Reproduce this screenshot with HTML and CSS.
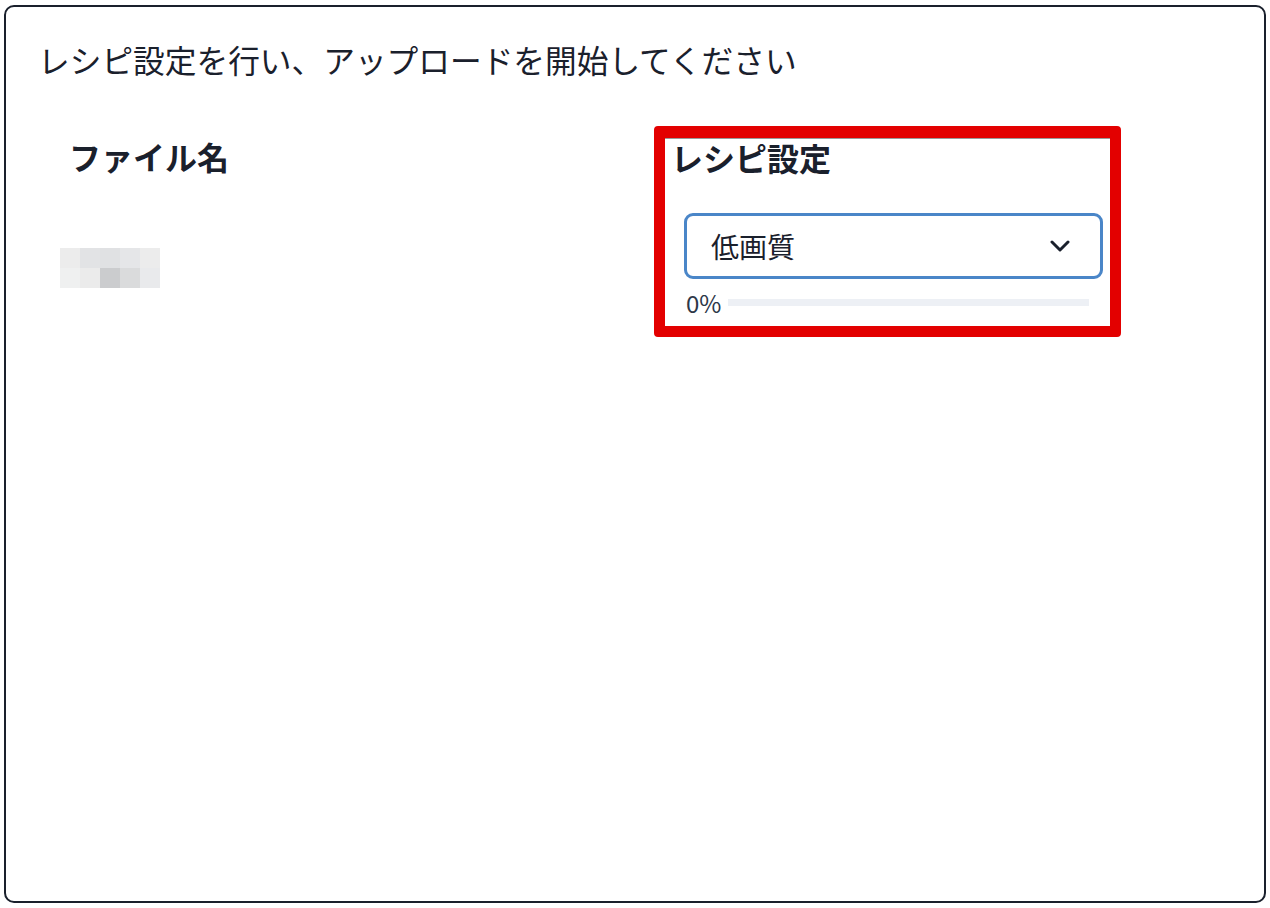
FILE: index.html
```html
<!doctype html>
<html>
<head>
    <title>アップロード</title>
    <meta charset="utf-8">
    <link rel="stylesheet" href="styles.css">
</head>
<body>
    <div class="card">
        <!-- 見出し -->
        <p class="title">レシピ設定を行い、アップロードを開始してください</p>

        <div class="table">
            <!-- ファイル名 -->
            <div class="col name-col">
                <h2 class="head">ファイル名</h2>
                <div class="blur">
                    <span class="c1"></span><span class="c2"></span><span class="c3"></span><span class="c4"></span><span class="c5"></span>
                    <span class="c6"></span><span class="c7"></span><span class="c8"></span><span class="c9"></span><span class="c10"></span>
                </div>
            </div>

            <!-- レシピ設定 -->
            <div class="col recipe-col">
                <div class="recipe-inner">
                    <h2 class="head">レシピ設定</h2>
                    <div class="select">
                        <span>低画質</span>
                        <svg width="20" height="12" viewBox="0 0 20 12">
                            <path d="M2 2 L10 10 L18 2" fill="none" stroke="#1a202c" stroke-width="3" stroke-linecap="round" stroke-linejoin="round"/>
                        </svg>
                    </div>
                    <div class="progress">
                        <span class="pct">0%</span>
                        <div class="bar"></div>
                    </div>
                </div>
            </div>
        </div>
    </div>
</body>
</html>
```

FILE: styles.css
```css
body {
    margin: 0;
    padding: 0;
    background: #fff;
    color: #1a202c;
    font-family: "Noto Sans CJK JP", "Noto Sans", sans-serif;
}

.card {
    box-sizing: border-box;
    margin: 5px 4px;
    height: 898px;
    border: 2px solid #1a202c;
    border-radius: 10px;
    padding: 29px 34px 32px 32px;
}

.title {
    margin: 0 0 44px 0;
    font-size: 31.7px;
    line-height: 46px;
    font-weight: normal;
}

.table {
    display: grid;
    grid-template-columns: 594px 467px;
    margin-left: 22px;
}

.head {
    margin: 0;
    font-size: 32px;
    line-height: 40px;
    font-weight: bold;
}

.name-col {
    padding-top: 10px;
}

.name-col .head {
    padding-left: 9px;
}

.blur {
    display: grid;
    grid-template-columns: repeat(5, 20px);
    grid-auto-rows: 20px;
    margin-top: 72px;
}

.c1 { background: #ececec; }
.c2 { background: #e2e3e5; }
.c3 { background: #e0e1e3; }
.c4 { background: #e5e6e8; }
.c5 { background: #ececec; }
.c6 { background: #eff0f0; }
.c7 { background: #ebebeb; }
.c8 { background: #cbccce; }
.c9 { background: #dadbdc; }
.c10 { background: #e9eaec; }

.recipe-col {
    border: 11px solid #e30000;
    border-top-width: 12px;
    border-radius: 4px;
}

.recipe-inner {
    border-top: 1px solid #9a9a9a;
    padding: 0 7px 8px 10px;
}

.recipe-inner .head {
    margin-top: -2px;
    margin-left: -4px;
}

.select {
    box-sizing: border-box;
    display: flex;
    align-items: center;
    justify-content: space-between;
    height: 66px;
    margin: 36px 0 0 9px;
    padding: 0 30px 0 24px;
    border: 3px solid #4a86c8;
    border-radius: 9px;
    font-size: 28px;
}

.progress {
    display: flex;
    align-items: center;
    margin: 7px 14px 0 11px;
    height: 32px;
}

.pct {
    font-size: 24px;
    color: #2d3748;
    margin-right: 7px;
}

.bar {
    flex: 1;
    height: 7px;
    background: #edf0f5;
}
```
